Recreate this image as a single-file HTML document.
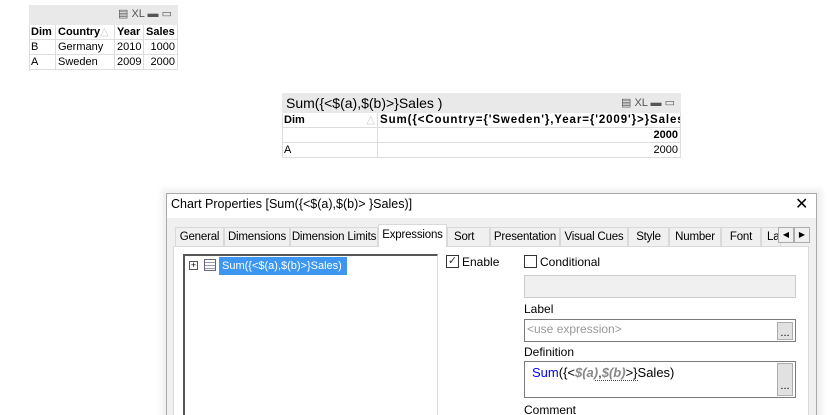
<!DOCTYPE html><html><head><style>
*{box-sizing:border-box;margin:0;padding:0}
html,body{width:828px;height:415px;overflow:hidden}
body{background:#fff;position:relative;font-family:"Liberation Sans",sans-serif;}
.a{position:absolute}
.t{font-family:"Liberation Sans",sans-serif;font-size:11px;color:#000;white-space:nowrap}
.c{position:absolute;border-right:1px solid #ddd;border-bottom:1px solid #ddd;padding:0 2px;line-height:14px;overflow:hidden}
.w{font-family:"Liberation Sans",sans-serif;font-size:12px;white-space:nowrap;color:#000}
.tab{position:absolute;top:227px;height:19px;border:1px solid #d9d9d9;border-bottom:none;background:#f0f0f0;font-size:11.5px;line-height:18px;text-align:center;overflow:hidden;letter-spacing:-0.2px}
</style></head><body>
<!-- table 1 -->
<div class="a" style="left:29px;top:5px;width:149px;height:20px;background:#e9e9e9"></div>
<div class="a t" style="left:118px;top:7px;font-size:11px;color:#555">&#9636; XL ▬ ▭</div>
<div class="a" style="left:29px;top:25px;width:149px;height:46px;border-left:1px solid #ddd"></div>
<div class="t">
<div class="c" style="left:29px;top:25px;width:27px;height:15px;font-weight:bold">Dim</div>
<div class="c" style="left:56px;top:25px;width:59px;height:15px;font-weight:bold">Country<span style="color:#ccc;font-weight:normal">△</span></div>
<div class="c" style="left:115px;top:25px;width:29px;height:15px;font-weight:bold">Year</div>
<div class="c" style="left:144px;top:25px;width:34px;height:15px;font-weight:bold">Sales</div>
<div class="c" style="left:29px;top:40px;width:27px;height:15px">B</div>
<div class="c" style="left:56px;top:40px;width:59px;height:15px">Germany</div>
<div class="c" style="left:115px;top:40px;width:29px;height:15px">2010</div>
<div class="c" style="left:144px;top:40px;width:34px;height:15px;text-align:right">1000</div>
<div class="c" style="left:29px;top:55px;width:27px;height:15px">A</div>
<div class="c" style="left:56px;top:55px;width:59px;height:15px">Sweden</div>
<div class="c" style="left:115px;top:55px;width:29px;height:15px">2009</div>
<div class="c" style="left:144px;top:55px;width:34px;height:15px;text-align:right">2000</div>
</div>
<!-- table 2 -->
<div class="a" style="left:282px;top:93px;width:399px;height:20px;background:#e9e9e9"></div>
<div class="a t" style="left:286px;top:95px;font-size:14px">Sum({&lt;$(a),$(b)&gt;}Sales )</div>
<div class="a t" style="left:621px;top:96px;font-size:11px;color:#555">&#9636; XL ▬ ▭</div>
<div class="a" style="left:282px;top:113px;width:399px;height:45px;border-left:1px solid #ddd"></div>
<div class="t">
<div class="c" style="left:282px;top:113px;width:96px;height:15px;font-weight:bold">Dim<span style="float:right;color:#ccc;font-weight:normal">△</span></div>
<div class="c" style="left:378px;top:113px;width:303px;height:15px;font-weight:bold;letter-spacing:0.9px;font-size:11.5px">Sum({&lt;Country={'Sweden'},Year={'2009'}&gt;}Sales)</div>
<div class="c" style="left:282px;top:128px;width:96px;height:15px"></div>
<div class="c" style="left:378px;top:128px;width:303px;height:15px;font-weight:bold;text-align:right">2000</div>
<div class="c" style="left:282px;top:143px;width:96px;height:15px">A</div>
<div class="c" style="left:378px;top:143px;width:303px;height:15px;text-align:right">2000</div>
</div>
<!-- dialog -->
<div class="a" style="left:162px;top:189px;width:660px;height:240px;background:#ddd;opacity:.5;filter:blur(3px)"></div>
<div class="a" style="left:166px;top:193px;width:651px;height:230px;background:#f0f0f0;border:1px solid #aaa"></div>
<div class="a" style="left:167px;top:194px;width:649px;height:24px;background:#fff"></div>
<div class="a w" style="left:171px;top:197px;font-size:12.5px">Chart Properties [Sum({&lt;$(a),$(b)&gt; }Sales)]</div>
<div class="a" style="left:795px;top:197px;font-size:16px;line-height:16px;color:#000">✕</div>
<div class="a" style="left:173px;top:246px;width:636px;height:180px;background:#fff;border:1px solid #d9d9d9"></div>
<div class="w">
<div class="tab" style="left:175px;width:49px">General</div>
<div class="tab" style="left:224px;width:66px">Dimensions</div>
<div class="tab" style="left:290px;width:88px">Dimension Limits</div>
<div class="tab" style="left:378px;top:224px;height:23px;width:69px;background:#fff;z-index:2;line-height:20px">Expressions</div>
<div class="tab" style="left:447px;width:43px;text-align:left;padding-left:6px">Sort</div>
<div class="tab" style="left:490px;width:70px">Presentation</div>
<div class="tab" style="left:560px;width:68px">Visual Cues</div>
<div class="tab" style="left:628px;width:41px">Style</div>
<div class="tab" style="left:669px;width:52px">Number</div>
<div class="tab" style="left:721px;width:40px">Font</div>
<div class="tab" style="left:761px;width:20px;text-align:left;padding-left:5px">La</div>
</div>
<div class="a" style="left:778px;top:227px;width:16px;height:16px;background:#f0f0f0;border:1px solid #adadad;font-size:8px;text-align:center;line-height:14px">◀</div>
<div class="a" style="left:794px;top:227px;width:16px;height:16px;background:#f0f0f0;border:1px solid #adadad;font-size:8px;text-align:center;line-height:14px">▶</div>
<!-- tree -->
<div class="a" style="left:183px;top:254px;width:255px;height:170px;border:1px solid #828282;border-right-color:#ddd;border-left:2px solid #555;border-top:2px solid #555;background:#fff"></div>
<div class="a" style="left:189px;top:261px;width:9px;height:9px;border:1px solid #555;font-size:9px;line-height:7px;text-align:center">+</div>
<div class="a" style="left:204px;top:259px;width:12px;height:12px;border:1px solid #667;background:repeating-linear-gradient(#fff 0 2px,#99a 2px 3px)"></div>
<div class="a w" style="left:219px;top:257px;width:128px;height:18px;background:#3d97f0;color:#fff;line-height:18px;padding-left:3px;font-size:11px;overflow:hidden">Sum({&lt;$(a),$(b)&gt;}Sales)</div>
<!-- right side -->
<div class="a" style="left:446px;top:255px;width:13px;height:13px;border:1px solid #333;font-size:11px;line-height:11px;text-align:center;color:#333">✓</div>
<div class="a w" style="left:462px;top:255px">Enable</div>
<div class="a" style="left:524px;top:255px;width:13px;height:13px;border:1px solid #333"></div>
<div class="a w" style="left:540px;top:255px">Conditional</div>
<div class="a" style="left:524px;top:275px;width:272px;height:23px;border:1px solid #ccc;background:#f0f0f0"></div>
<div class="a w" style="left:524px;top:302px">Label</div>
<div class="a" style="left:524px;top:319px;width:272px;height:23px;border:1px solid #7a7a7a;background:#fff"></div>
<div class="a w" style="left:527px;top:322px;color:#999">&lt;use expression&gt;</div>
<div class="a" style="left:777px;top:322px;width:16px;height:18px;border:1px solid #adadad;background:#e1e1e1;font-size:11px;text-align:center;line-height:20px">...</div>
<div class="a w" style="left:524px;top:345px">Definition</div>
<div class="a" style="left:524px;top:361px;width:272px;height:37px;border:1px solid #7a7a7a;background:#fff"></div>
<div class="a w" style="left:532px;top:365px;font-size:13px"><span style="color:#00f">Sum</span>({&lt;<i style="color:#888;font-weight:bold">$(a)</i>,<i style="color:#888;font-weight:bold">$(b)</i>&gt;}Sales)</div>
<div class="a" style="left:595px;top:380px;width:43px;border-bottom:1px dotted #e00"></div>
<div class="a" style="left:777px;top:363px;width:16px;height:33px;border:1px solid #adadad;background:#e1e1e1;font-size:11px;text-align:center;line-height:44px">...</div>
<div class="a w" style="left:524px;top:403px">Comment</div>
</body></html>
